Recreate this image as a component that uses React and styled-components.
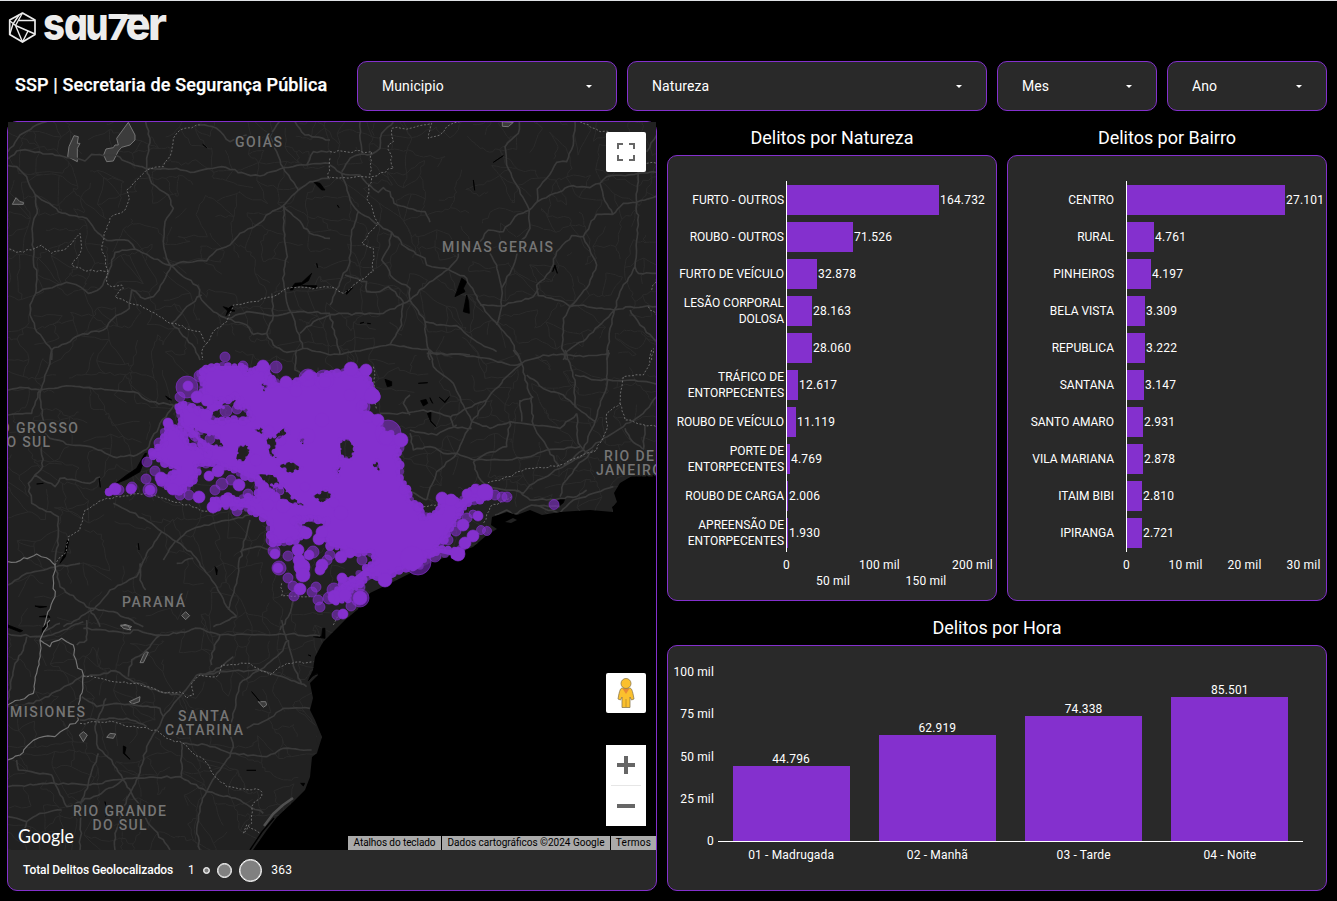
import React from "react";
import styled, { createGlobalStyle } from "styled-components";

const PURPLE = "#8430ce";

const GlobalStyle = createGlobalStyle`
  * { box-sizing: border-box; }
  body { margin: 0; background: #000; font-family: Roboto, "Liberation Sans", sans-serif; color: #fff; }
`;

const Page = styled.main`
  width: 1337px;
  height: 901px;
  background: #000;
  border-top: 1px solid #dfe1e5;
  overflow: hidden;
`;
const Brand = styled.header`
  height: 60px;
  padding-left: 8px;
  svg { display: block; }
`;
const FilterBar = styled.div`
  display: flex;
  gap: 10px;
  height: 50px;
`;
const PageTitle = styled.h1`
  width: 347px;
  margin: 0;
  padding-left: 15px;
  font-size: 18px;
  font-weight: 500;
  line-height: 48px;
  letter-spacing: 0.13px;
  white-space: nowrap;
  -webkit-text-stroke: 0.25px #fff;
`;
const Select = styled.button`
  width: ${(p) => p.$width}px;
  height: 50px;
  display: flex;
  align-items: center;
  justify-content: space-between;
  padding: 0 24px 0 24px;
  background: #292929;
  border: 1px solid ${PURPLE};
  border-radius: 10px;
  color: #fff;
  font: 400 14px Roboto, sans-serif;
  letter-spacing: 0.08px;
`;
const Caret = styled.span`
  border: 3.5px solid transparent;
  border-top: 3.5px solid #fff;
  border-bottom: 0;
  margin-top: 1px;
`;
const Content = styled.div`
  display: flex;
  gap: 10px;
  padding: 10px 10px 0 7px;
`;
const MapCard = styled.section`
  width: 650px;
  height: 770px;
  background: #292929;
  border: 1px solid ${PURPLE};
  border-radius: 10px;
`;
const MapView = styled.div`
  position: relative;
  height: 728px;
  background: #000;
  > svg { display: block; }
`;
const Controls = styled.div`
  position: absolute;
  right: 10px;
  top: ${(p) => p.$top}px;
  width: 40px;
  background: #fff;
  border-radius: ${(p) => p.$radius || 0}px;
  display: flex;
  flex-direction: column;
  align-items: center;
`;
const ControlButton = styled.button`
  width: 40px;
  height: 40px;
  padding: 0;
  border: 0;
  background: none;
  display: flex;
  align-items: center;
  justify-content: center;
`;
const Divider = styled.i`
  width: 30px;
  height: 1px;
  background: #e6e6e6;
`;
const Attribution = styled.div`
  position: absolute;
  right: 0;
  bottom: 0;
  display: flex;
  gap: 1px;
  font-size: 10px;
  line-height: 14px;
  color: #000;
`;
const Credit = styled.span`
  width: ${(p) => p.$width}px;
  background: #aaa;
  text-align: center;
  letter-spacing: ${(p) => p.$spacing}px;
  white-space: nowrap;
`;
const Legend = styled.div`
  height: 40px;
  display: flex;
  align-items: center;
  padding-left: 15px;
  font-size: 12px;
`;
const LegendName = styled.b`
  width: 165px;
  font-weight: 500;
  letter-spacing: -0.08px;
  white-space: nowrap;
`;
const LegendDot = styled.i`
  width: ${(p) => p.$size}px;
  height: ${(p) => p.$size}px;
  margin-left: ${(p) => p.$gap}px;
  border: 1.5px solid #fff;
  border-radius: 50%;
  background: #808080;
  box-shadow: inset 0 0 0 0.5px #ddd;
`;
const LegendMax = styled.span`
  margin-left: 9px;
  letter-spacing: 0.25px;
`;
const Charts = styled.div`
  width: 660px;
`;
const ChartRow = styled.div`
  display: flex;
  gap: 10px;
  margin-bottom: 10px;
`;
const Panel = styled.section`
  width: ${(p) => p.$width}px;
`;
const PanelTitle = styled.h2`
  height: 34px;
  margin: 0;
  font-size: 18px;
  font-weight: 400;
  line-height: 33px;
  letter-spacing: -0.02px;
  text-align: center;
`;
const ChartCard = styled.div`
  height: ${(p) => p.$height}px;
  padding-top: 25px;
  background: #292929;
  border: 1px solid ${PURPLE};
  border-radius: 10px;
  font-size: 12px;
`;
const Bars = styled.div`
  display: grid;
  grid-template-columns: 118px 1fr;
`;
const BarLabels = styled.div`
  padding-right: ${(p) => p.$pad}px;
`;
const BarLabel = styled.div`
  height: 37px;
  padding-top: 1px;
  display: flex;
  align-items: center;
  justify-content: flex-end;
  line-height: 16px;
  text-align: right;
  white-space: pre;
  letter-spacing: -0.01px;
`;
const BarPlot = styled.div`
  height: 371px;
  border-left: 1px solid #fff;
`;
const BarRow = styled.div`
  height: 37px;
  padding-top: 4px;
  display: flex;
  gap: 1px;
  line-height: 30px;
  letter-spacing: 0.2px;
`;
const Bar = styled.div`
  height: 30px;
  background: ${PURPLE};
`;
const XAxis = styled.div`
  width: ${(p) => p.$width}px;
  margin-left: 118px;
  display: flex;
  justify-content: space-between;
`;
const XTick = styled.span`
  width: 1px;
  display: flex;
  justify-content: center;
  white-space: nowrap;
  line-height: 16px;
  padding-top: ${(p) => (p.$lower ? 21 : 5)}px;
  letter-spacing: 0.2px;
`;
const HourChart = styled.div`
  display: flex;
  gap: 4px;
  letter-spacing: 0.15px;
`;
const YAxis = styled.div`
  width: 46px;
  height: 170px;
  display: flex;
  flex-direction: column;
  justify-content: space-between;
`;
const YTick = styled.span`
  height: 0;
  line-height: 0;
  text-align: right;
  padding-top: 1px;
`;
const HourPlot = styled.div`
  width: 585px;
`;
const HourBars = styled.div`
  height: 171px;
  display: flex;
  align-items: flex-end;
  justify-content: space-around;
  border-bottom: 1px solid #fff;
`;
const HourColumn = styled.div`
  width: 117px;
  text-align: center;
  line-height: 14px;
`;
const HourNames = styled.div`
  display: flex;
  padding-top: 5px;
`;
const HourName = styled.span`
  flex: 1;
  text-align: center;
  line-height: 16px;
`;

const natures = [
  ["FURTO - OUTROS", 164732, "164.732"],
  ["ROUBO - OUTROS", 71526, "71.526"],
  ["FURTO DE VEÍCULO", 32878, "32.878"],
  ["LESÃO CORPORAL\nDOLOSA", 28163, "28.163"],
  ["", 28060, "28.060"],
  ["TRÁFICO DE\nENTORPECENTES", 12617, "12.617"],
  ["ROUBO DE VEÍCULO", 11119, "11.119"],
  ["PORTE DE\nENTORPECENTES", 4769, "4.769"],
  ["ROUBO DE CARGA", 2006, "2.006"],
  ["APREENSÃO DE\nENTORPECENTES", 1930, "1.930"],
];
const districts = [
  ["CENTRO", 27101, "27.101"],
  ["RURAL", 4761, "4.761"],
  ["PINHEIROS", 4197, "4.197"],
  ["BELA VISTA", 3309, "3.309"],
  ["REPUBLICA", 3222, "3.222"],
  ["SANTANA", 3147, "3.147"],
  ["SANTO AMARO", 2931, "2.931"],
  ["VILA MARIANA", 2878, "2.878"],
  ["ITAIM BIBI", 2810, "2.810"],
  ["IPIRANGA", 2721, "2.721"],
];
const hours = [
  ["01 - Madrugada", 75, "44.796"],
  ["02 - Manhã", 106, "62.919"],
  ["03 - Tarde", 125, "74.338"],
  ["04 - Noite", 144, "85.501"],
];

/* ---- map geometry ---- */

// Each sheet is drawn on a grid three times finer than the map.
const sheets = [
  {
    x: 0, y: 115,
    roads: `M24,110 60,60 100,35 140,20M24,132 50,108 75,104 105,112 180,122 215,128 255,138 275,118 310,122 345,120 380,140 440,162
M437,20 450,70 440,130 440,162 455,205 480,225 505,240 520,280 495,320 490,380 500,430 513,452M440,162 530,160 570,172 665,155 740,178 780,183 850,158 920,150 990,145
M24,152 50,155 80,185 105,238 160,275 175,290 260,310 285,345 312,370 335,377 385,377 405,402 450,425 513,452 550,485 592,512 605,555 640,590 682,612
M105,238 112,285 98,330 100,430 110,480 107,535 90,570 90,600 105,640 155,705 155,735M107,535 145,520 200,502 240,515 265,535 300,520 325,475 345,412 405,402
M513,452 550,440 620,438 650,405 690,390 720,355 770,330 810,295 850,272 895,225 930,200 990,190M838,20 810,65 830,110 850,158 895,225
M850,272 853,370 862,425 848,490 860,560 885,620 908,700M850,272 890,310 930,355 990,370M600,30 650,40 690,80 740,60M885,20 915,60 990,75M920,150 940,110 990,108
M513,452 490,500 460,545 435,552 395,525 388,580 340,610 310,645 240,660 200,685 155,705M515,625 560,575 605,540M682,612 740,590 820,602 900,590 990,595
M682,612 740,630 760,658 800,655 820,690 860,712 910,700 990,720M815,535 820,602 800,655M515,625 560,670 585,700 600,735M900,655 940,620 990,600`,
    dots: `M28,402 50,412 95,405 125,390 155,415 200,400 240,355 245,400 215,450 250,465 325,470M600,30 540,45 520,70 515,110 490,155 440,165 400,205 380,225 388,250 375,285 330,310 312,370 305,400 325,470 320,500 335,515 365,510 370,520 345,545 390,565 420,570 510,625 600,650 620,685 605,710 608,735M620,685 640,650 680,620 700,570 760,560 830,540 860,520 990,517M990,130 985,190`,
    parks: `M203,125 207,95 222,62 235,65 232,85 240,85 232,100 232,140ZM350,70 385,22 405,60 405,75 390,90 365,97 355,108 340,138 320,140 311,120 318,102 340,98 345,90 355,90ZM37,268 48,248 60,260 70,262 70,268Z`,
    water: `M870,525 885,505 905,503 935,475 925,497 900,512 885,514 878,525ZM940,200 960,205 975,225 965,225ZM670,575 685,580 700,570 695,582 705,588 688,590 678,602 683,588ZM608,88 620,98ZM950,445 953,458ZM905,512 950,512 948,520 935,516Z`,
  },
  {
    x: 330, y: 115,
    roads: `M90,20 95,115M190,22 155,55 150,100 125,118 90,118 60,130 35,170M0,150 35,175 50,215 60,255 85,290 65,345 60,440 35,490 0,570M35,175 90,180 110,205 145,232 160,218 180,230 192,265 235,280 285,290 300,322
M85,290 125,315 185,352 225,395 285,430 290,450 355,463 410,490 450,565 495,620 540,670 570,735M185,352 175,400 155,435 190,490 240,520 240,555 285,620 290,680 300,735M355,463 290,510 240,555 160,595 0,598
M568,20 565,55 525,95 530,150 560,210 598,285 600,340 575,375 555,440 515,520 515,575 500,630M735,20 730,90 710,140 680,142 650,190 622,222 622,260 598,285 555,305 520,350 475,345 450,380
M622,260 660,240 730,212 780,218 810,205 830,185 925,175 980,172M925,170 920,265 925,330 915,455 870,530 853,585 840,640 830,735M810,205 820,245 848,298 800,298 760,365 800,450 770,520 720,575 700,610 695,700 710,735
M848,298 880,265 920,262 980,243M760,365 725,362 680,410 660,470 620,510 625,542 700,560 720,575 760,570 800,580 853,585 900,575 980,575M480,415 500,450 515,520M450,570 515,573 560,560 610,545 625,520
M853,585 770,670 710,710 700,735M900,585 930,630 980,680M0,720 100,705 180,688 300,705 310,715 420,720M0,598 30,720M285,620 320,630 380,632 440,680 500,710M385,410 380,435 355,463M220,560 215,630 180,690
M45,480 110,500 110,530 150,530 175,515 220,560M915,455 925,475 980,475M980,60 950,110`,
    dots: `M390,20 350,35 330,60 295,70 305,25 240,40 185,40 190,80 175,90 190,160 125,185 110,250 145,325 95,385 130,400 130,470 90,495 40,535 0,515M0,110 125,110 120,187 0,187M750,20 810,50 840,50M950,145 980,145M980,490 965,525M955,575 980,600M965,735 970,700`,
    parks: `M517,20 517,34 535,35 550,22Z`,
    water: `M375,545 395,490 410,500 400,520 405,530ZM400,590 410,540 416,560 418,595ZM45,530 68,518 50,538ZM490,142 520,122ZM430,195 434,226ZM22,270 27,278ZM90,625 102,622ZM112,625 122,626ZM668,470 675,450 682,475 674,455Z`,
  },
  {
    x: 0, y: 350,
    roads: `M155,0 150,40 120,130M24,120 60,112 120,120 215,108 330,120 400,125 450,155 520,165M120,120 95,190 24,195M120,130 135,250 150,265 215,285 270,290 350,323 410,315 440,298 480,220 530,160
M125,290 128,350 105,375 85,400 95,460 175,500 175,560 165,645 180,710 270,775 300,830M105,375 165,410 180,385 215,388 270,400 300,380M24,705 80,670 165,652 240,640
M340,460 380,480 430,505 485,545 530,575 560,545 600,530 690,510 750,495M530,575 580,615 650,710 680,770 710,800M485,545 440,610 410,680 330,720 280,780 190,830M750,510 730,590 715,650 710,700 685,780
M530,640 580,625M490,630 525,575M880,750 865,800 840,840M720,605 770,590 820,600M270,775 340,785 430,830M420,640 420,690 437,720M890,0 885,60 930,90M640,830 710,800`,
    dots: `M165,645 200,600 205,560 240,540 255,480 320,445 440,430 640,490M845,700 845,738 930,740`,
    solid: `M24,635 60,632 110,612 150,630 165,645 160,690 165,740 140,800 130,840`,
    parks: `M557,785 569,797 557,809 545,797ZM362,828 375,823 395,830 385,838Z`,
    water: `M345,402 380,375 410,355 435,310 440,310 420,365 380,388ZM202,570 206,575 196,620 180,640 194,610ZM105,768 140,770 120,773ZM118,800 145,796 150,802ZM415,580 417,600ZM645,650 652,660 650,675ZM110,402 130,400ZM497,138 515,150 505,148ZM297,380 301,412Z`,
  },
  {
    x: 330, y: 350,
    roads: `M300,0 310,50 370,100 400,165 425,215M290,10 400,15 490,30 540,45 575,40M550,0 575,40 530,80 470,150 425,215 380,310 320,365 290,450M575,40 585,90 605,140 610,225 650,290 690,350
M575,40 640,15 720,15 760,20 840,10M705,0 735,90 735,170 795,215M835,0 830,110 795,215 760,300 700,350M590,75 650,120 700,135 740,170M735,75 800,90 900,90 950,95 980,102
M425,215 480,235 540,215 610,225 690,235 740,190M470,150 400,180 360,205M380,310 440,330 520,330 600,320 650,300 750,290M230,190 280,180 330,190 360,200 370,230 425,235M240,135 220,160 240,195M240,250 250,300 300,290 340,310 380,310
M240,240 320,255 380,225M430,335 445,380 470,410 540,420 580,430 600,405 700,350M540,215 530,290 470,310 430,335M700,350 760,315 820,265 880,230 940,190 980,140M560,420 600,450 690,445M690,440 700,400 740,350 790,300
M605,465 690,490 730,450 850,410M690,445 740,440 770,420M885,235 900,265 940,300M945,225 940,300M150,190 230,190M495,495 530,480 550,495 605,465 690,470M740,190 745,280 770,310M570,150 575,215M290,450 230,420M610,140 570,155`,
    dots: `M965,0 960,40 940,75 880,80 870,160 830,190 830,240 800,300 690,345 600,355 530,380 470,400M870,160 885,210 980,230M545,440 480,470 460,520M280,470 340,465M130,50 135,120 140,180M10,825 30,790`,
    water: `M165,88 185,95 185,107 172,110ZM272,152 288,148 293,160 280,168ZM328,142 344,155 358,140 345,158ZM292,190 303,187 302,215 318,230 300,210ZM685,450 705,445 700,458 690,466ZM265,100 293,98ZM300,143 308,160 302,150Z`,
  },
  {
    x: 0, y: 620,
    roads: `M24,42 120,50 155,45 250,5M80,50 70,90 45,130 24,240M260,0 260,60 230,75M250,25 390,40 400,30 480,45 530,40 600,25 660,45 800,45 870,42 960,48M480,45 430,100 395,120 385,170M660,45 635,100 635,135
M590,165 540,230 490,290 470,330 440,380 415,470 370,560 345,640 345,690M250,168 300,165 345,152 380,175 440,200 480,215 540,225M245,230 290,260 350,250 480,265 490,290M24,260 100,250 180,210 250,165M240,300 380,295 440,320
M318,235 285,320 295,385 335,420 370,480 395,520 440,600 510,690M295,400 265,490 245,540 240,690M24,500 165,490 270,495 380,475 540,470 620,515 720,540 790,580M50,420 55,450 155,465 175,510 200,560 280,530 380,475M545,370 545,470
M620,515 600,560 590,640 600,690M620,515 650,460 690,410 700,380 690,330 720,190 780,150 860,175 920,200M690,400 760,405 800,410 850,385 935,390M590,165 680,155 780,150M865,60 840,100 780,150M865,60 885,150 905,195M845,0 860,60
M740,325 800,300 850,265 930,265M24,590 80,605 120,580 185,570M80,605 60,660M545,370 620,375 690,400M130,35 180,10M590,165 640,155 700,110`,
    dots: `M250,168 300,175 340,185 400,190 480,215 550,220 560,235 580,225 575,190 600,165 650,170 665,135 750,130 810,165 860,130 940,125M240,310 340,305 390,320 470,330 500,355 550,370 620,430 645,470 680,500 780,510 785,530 755,560 755,610 730,640 740,615 780,640`,
    solid: `M150,0 120,60 150,80 155,68 185,55 200,65 220,75 230,130 250,165 240,240 235,300 190,330 165,350 130,350 90,370 60,405 24,420M120,60 120,100 110,160 100,220 60,240 24,255`,
    parks: `M362,15 385,18 392,30 370,25ZM420,128 435,95 445,97 430,128ZM388,245 420,230 418,245 398,252ZM238,345 250,335 262,345 250,365ZM320,352 330,340 347,342 340,355ZM775,245 797,245 800,255 790,262Z`,
    water: `M24,15 68,32 60,36 24,22ZM128,25 150,0 142,20 126,45ZM370,378 378,382 374,400 390,418 370,400ZM740,451 768,451ZM925,182 940,162 955,160 938,168ZM315,545 318,560ZM315,580 318,590ZM755,215 780,245ZM925,105 933,108ZM902,490 914,490 910,498ZM940,50 965,50 968,25 975,25 975,55Z`,
  },
];

const COAST =
  "M656,475 632,476 620,483 614,493 617,502 612,507 613,512 590,510 560,512 542,515 530,510 517,515 507,512 492,517 491,525 497,529 487,535 473,547 430,563 397,580 370,593 357,610 345,620 330,635 323,642 315,657 313,670 308,680 317,673 318,675 310,683 313,698 310,710 315,720 322,737 317,753 312,757 310,777 305,790 293,802 277,817 267,830 253,850 8,850 8,122 656,122Z";

function seeded(seed) {
  let s = seed;
  return () => {
    s = (s * 1664525 + 1013904223) % 4294967296;
    return s / 4294967296;
  };
}

// Faint mesh of secondary roads.
function localRoads() {
  const rnd = seeded(41);
  const step = 16;
  const cols = 42;
  const rows = 48;
  const pts = [];
  for (let r = 0; r < rows; r++)
    for (let c = 0; c < cols; c++)
      pts.push([8 + c * step + (rnd() - 0.5) * 15, 118 + r * step + (rnd() - 0.5) * 15]);
  let d = "";
  const link = (a, b) => {
    d += `M${a[0].toFixed(1)},${a[1].toFixed(1)}`;
    for (let i = 1; i <= 4; i++) {
      const j = i === 4 ? 0 : 3.6;
      const x = a[0] + ((b[0] - a[0]) * i) / 4 + (rnd() - 0.5) * j;
      const y = a[1] + ((b[1] - a[1]) * i) / 4 + (rnd() - 0.5) * j;
      d += `L${x.toFixed(1)},${y.toFixed(1)}`;
    }
  };
  for (let r = 0; r < rows - 1; r++)
    for (let c = 0; c < cols - 1; c++) {
      const p = pts[r * cols + c];
      if (rnd() < 0.5) link(p, pts[r * cols + c + 1]);
      if (rnd() < 0.5) link(p, pts[(r + 1) * cols + c]);
      if (rnd() < 0.12) link(p, pts[(r + 1) * cols + c + 1]);
    }
  return d;
}

// Adds small bends to a traced polyline.
function roughen(path, seed, amount) {
  const rnd = seeded(seed);
  return path
    .split("M")
    .filter((s) => s.trim())
    .map((s) => {
      const pts = s.trim().split(/\s+/).map((t) => t.split(",").map(Number));
      let out = `M${pts[0]}`;
      for (let i = 1; i < pts.length; i++) {
        const [ax, ay] = pts[i - 1];
        const [bx, by] = pts[i];
        const n = Math.max(1, Math.round(Math.hypot(bx - ax, by - ay) / 13));
        for (let k = 1; k <= n; k++) {
          const j = k === n ? 0 : amount;
          out += `L${(ax + ((bx - ax) * k) / n + (rnd() - 0.5) * j).toFixed(1)},${(ay + ((by - ay) * k) / n + (rnd() - 0.5) * j).toFixed(1)}`;
        }
      }
      return out;
    })
    .join("");
}

const outline = [
  [200, 374], [206, 369], [217, 366], [228, 366], [241, 366], [247, 372], [256, 370], [262, 366], [266, 368], [268, 376], [276, 382], [290, 386],
  [297, 382], [303, 379], [309, 374], [318, 377], [327, 374], [337, 373], [350, 369], [356, 374], [364, 370], [368, 380], [372, 390], [376, 397],
  [364, 401], [363, 410], [369, 417], [378, 420], [382, 430], [400, 437], [400, 448], [396, 457], [400, 465], [400, 478], [407, 489], [410, 500],
  [419, 507], [422, 517], [430, 516], [440, 510], [443, 498], [452, 498], [458, 503], [467, 494], [475, 488], [486, 490], [488, 496], [480, 500],
  [468, 503], [460, 512], [457, 520], [450, 528], [444, 540], [436, 548], [448, 550], [461, 549], [460, 556], [454, 556], [436, 552], [428, 554], [420, 566],
  [406, 568], [392, 573], [386, 581], [377, 576], [367, 576], [360, 584], [350, 590], [348, 600], [336, 602], [333, 595], [342, 584], [352, 579], [366, 568],
  [376, 561], [371, 553], [358, 553], [350, 553], [344, 549], [330, 546], [323, 534], [326, 521], [318, 520], [310, 518], [302, 520], [298, 518], [294, 521],
  [303, 530], [306, 535], [295, 540], [284, 543], [273, 543], [270, 535], [270, 522], [256, 514], [247, 508], [234, 506], [218, 508], [213, 504], [213, 500],
  [220, 500], [228, 497], [237, 500], [248, 497], [257, 499], [258, 487], [258, 480], [245, 476], [234, 470], [225, 467], [216, 464],
  [208, 462], [196, 464], [198, 472], [193, 480], [187, 487], [179, 491], [167, 487], [161, 482], [172, 475], [177, 470], [165, 463], [153, 456], [152, 452], [164, 443],
  [164, 432], [170, 425], [179, 430], [184, 436], [188, 446], [198, 447], [208, 454], [202, 444], [192, 434], [181, 425], [180, 415], [178, 407], [184, 404], [192, 408], [202, 412],
  [212, 420], [222, 421], [234, 419], [243, 421], [252, 418], [247, 409], [238, 405], [240, 400], [235, 396], [228, 400], [219, 401], [210, 400], [202, 392], [203, 383],
];
const gaps = [
  [[197, 430], [203, 434], [215, 437], [220, 445], [214, 444], [203, 440]],
  [[240, 448], [246, 447], [248, 452], [243, 460], [238, 458]],
  [[256, 430], [262, 428], [263, 434]],
  [[269, 439], [275, 438], [282, 432], [285, 435], [277, 441], [275, 449], [277, 454], [272, 452]],
  [[282, 466], [291, 463], [298, 468], [290, 472]],
  [[262, 476], [274, 477], [278, 485], [270, 487]],
  [[276, 488], [283, 488], [291, 497], [300, 503], [293, 502], [280, 497]],
  [[316, 496], [325, 491], [330, 496], [322, 501]],
  [[342, 443], [348, 442], [353, 449], [350, 456], [343, 455]],
  [[336, 470], [340, 468], [338, 474]],
  [[212, 411], [221, 407], [219, 401], [208, 404]],
  [[373, 465], [377, 462], [379, 470]],
  [[262, 384], [267, 386], [264, 391]],
  [[300, 440], [304, 438], [303, 444]],
];

// x, y, radius, 1 = solid
const spots = [
  [225, 357, 5], [243, 366, 5], [263, 366, 6, 1], [276, 367, 6], [187, 387, 11], [188, 386, 5, 1], [180, 397, 5], [200, 376, 6], [197, 397, 6, 1], [207, 400, 6, 1],
  [226, 411, 6], [237, 409, 5], [199, 411, 5], [206, 415, 6, 1], [168, 423, 5, 1], [159, 443, 5], [147, 462, 5], [146, 479, 5], [155, 471, 5], [150, 490, 7], [150, 490, 5, 1],
  [109, 492, 4, 1], [115, 489, 6, 1], [119, 490, 5], [131, 489, 5, 1], [132, 487, 5], [161, 478, 6, 1], [173, 489, 6, 1], [189, 495, 5], [180, 495, 5], [199, 497, 6, 1], [213, 507, 6, 1],
  [206, 463, 5], [218, 471, 6, 1], [209, 476, 5, 1], [215, 490, 5], [222, 484, 6], [231, 480, 5], [239, 485, 6, 1], [248, 494, 5], [210, 439, 5], [195, 436, 5], [186, 431, 5],
  [237, 511, 5], [226, 500, 5, 1], [264, 487, 5, 1], [275, 497, 5, 1], [268, 505, 6], [283, 506, 7, 1], [305, 487, 5, 1], [280, 491, 4], [256, 460, 6, 1], [269, 430, 5, 1], [281, 441, 5],
  [272, 383, 5], [286, 382, 6, 1], [296, 391, 6], [308, 378, 9], [309, 375, 5, 1], [324, 380, 10], [325, 382, 6, 1], [351, 369, 7, 1], [366, 370, 6, 1], [372, 396, 8, 1], [363, 407, 7],
  [368, 417, 6, 1], [378, 420, 6, 1], [388, 433, 13], [386, 438, 7, 1], [401, 440, 7, 1], [350, 395, 6], [322, 420, 7], [307, 436, 8], [334, 503, 5], [341, 513, 7], [404, 490, 5], [418, 507, 5],
  [554, 504.5, 5], [495, 495, 5], [502, 497, 5], [507, 497, 5], [476, 489, 5], [467, 494, 5, 1], [485, 492, 8, 1], [478, 516, 5, 1], [467, 518, 5], [473, 514, 4], [463, 525, 6, 1], [456, 531, 5], [487, 531, 4.5], [481, 530, 4.5],
  [473, 536, 6, 1], [465, 543, 6, 1], [458, 554, 7, 1], [442, 498, 6, 1], [451, 500, 6, 1], [448, 540, 5], [418, 562, 13], [412, 558, 12, 1], [435, 556, 6], [385, 580, 7, 1], [362, 560, 5],
  [341, 557, 6, 1], [330, 555, 5], [350, 553, 5, 1], [342, 578, 5, 1], [334, 590, 7], [335, 597, 7, 1], [360, 598, 9], [360, 598, 7, 1], [351, 606, 5], [343, 614, 5, 1], [337, 615, 5], [345, 595, 6, 1], [360, 587, 5],
  [279, 568, 7], [278, 568, 5, 1], [288, 556, 5], [299, 560, 6, 1], [302, 567, 8, 1], [309, 555, 5, 1], [313, 552, 6], [322, 565, 6, 1], [327, 560, 5], [300, 589, 6, 1], [288, 578, 5], [293, 586, 5], [294, 596, 5],
  [306, 533, 6, 1], [319, 539, 6, 1], [322, 532, 6, 1], [316, 587, 5], [312, 592, 5], [318, 600, 5], [320, 607, 5], [329, 598, 6], [320, 570, 5, 1], [274, 551, 6], [272, 540, 6], [275, 554, 5, 1], [298, 550, 6, 1], [303, 575, 7, 1],
];

const closed = (pts) => `M${pts.map((p) => p.join(",")).join("L")}Z`;

// Gaps grow a little so that the dots laid on their rims leave them open.
const widened = gaps.map((pts) => {
  const cx = pts.reduce((s, p) => s + p[0], 0) / pts.length;
  const cy = pts.reduce((s, p) => s + p[1], 0) / pts.length;
  return pts.map(([x, y]) => [cx + (x - cx) * 1.4, cy + (y - cy) * 1.4]);
});
const bodyPath = closed(outline) + widened.map(closed).join("");

const textureRnd = seeded(7);
const along = (pts, r) =>
  pts.flatMap(([x, y], i) => {
    const [nx, ny] = pts[(i + 1) % pts.length];
    return [
      [x, y, r + textureRnd() * 1.8],
      [(x + nx) / 2, (y + ny) / 2, r - 0.6 + textureRnd() * 1.8],
    ];
  });
const rim = [...along(outline, 3.2), ...widened.flatMap((g) => along(g, 1.3))];

const MapLabel = styled.text`
  font: 500 14px Roboto, sans-serif;
  fill: #757575;
  stroke: #212121;
  stroke-width: 3px;
  paint-order: stroke;
  text-anchor: middle;
`;
const GoogleMark = styled.text`
  font: 400 20px Lato, sans-serif;
  fill: #fff;
  stroke: #222;
  stroke-width: 2px;
  paint-order: stroke;
`;
const labels = [
  ["GOIÁS", 258.5, 146.5, 47], ["MINAS GERAIS", 497.5, 251.5, 111], ["O GROSSO", 39, 432.5, 78], ["DO SUL", 23, 446.5, 54], ["RIO DE", 629, 460.5, 50], ["JANEIRO", 629, 474.5, 66],
  ["PARANÁ", 153.5, 606.5, 63], ["MISIONES", 47.5, 716.5, 75], ["SANTA", 203.5, 720.5, 51], ["CATARINA", 204, 734.5, 78], ["RIO GRANDE", 119.5, 815.5, 93], ["DO SUL", 119.5, 829.5, 54],
];

function TerrainMap() {
  return (
    <svg width="648" height="728" viewBox="8 122 648 728" aria-label="Mapa">
      <defs>
        <clipPath id="land"><path d={COAST} /></clipPath>
      </defs>
      <path d={COAST} fill="#212121" />
      <g clipPath="url(#land)" fill="none" strokeLinejoin="round">
        <path d={localRoads()} stroke="#2b2b2b" strokeWidth="1" />
        {sheets.map((s, i) => (
          <g key={i} transform={`translate(${s.x} ${s.y}) scale(0.33333)`}>
            {s.parks && <path d={s.parks} fill="#3c3c3c" stroke="#757575" strokeWidth="3" />}
            <path d={s.water} fill="#000" stroke="#000" strokeWidth="2.5" />
            <path d={roughen(s.roads, i + 3, 6)} stroke="#3a3a3a" strokeWidth="5" />
            <path d={roughen(s.dots, i + 9, 7)} stroke="#777" strokeWidth="2.6" strokeDasharray="6 5" />
            {s.solid && <path d={roughen(s.solid, i + 5, 8)} stroke="#757575" strokeWidth="3.5" />}
          </g>
        ))}
        <path d="M293,798 283,805 273,814 264,826" stroke="#505050" strokeWidth="2.5" />
        <path d="M274,818 262,832 250,850" stroke="#000" strokeWidth="1.5" />
      </g>
      <path d="M505,522l8,-4 4,2 -6,3zM322,737l-4,8 -2,-6 3,-8z" fill="#212121" />
      {labels.map(([t, x, y, w]) => (
        <MapLabel key={t + y} x={x} y={y} textLength={w}>{t}</MapLabel>
      ))}
      <path d={bodyPath} fill={PURPLE} fillRule="evenodd" />
      {rim.map(([x, y, r], i) => (
        <circle key={i} cx={x} cy={y} r={r} fill={PURPLE} fillOpacity={i % 5 ? 0.95 : 0.6} />
      ))}
      {spots.map(([x, y, r, solid], i) => (
        <circle key={i} cx={x} cy={y} r={r} fill={PURPLE} fillOpacity={solid ? 1 : 0.58} stroke={PURPLE} strokeOpacity="0.8" strokeWidth="0.8" />
      ))}
      <GoogleMark x="18" y="843" textLength="56" lengthAdjust="spacingAndGlyphs">Google</GoogleMark>
    </svg>
  );
}

const Wordmark = styled.text`
  font: 800 45px Inter, sans-serif;
  font-feature-settings: "cv11";
  fill: #ececec;
`;

function Logo() {
  return (
    <svg width="170" height="60" viewBox="8 1 170 60" aria-label="sauzer">
      <g fill="none" stroke="#ececec" strokeWidth="1.7" strokeLinejoin="round">
        <path d="M22.500,13 35,20V34.500L22.500,42 9.700,34.500V20Z" />
        <path d="M19,15 13,24 9.700,34.500M19,20.500 35,20.500M22.500,13 15.500,25.500 35,34M15.500,25.500 22.500,42 28,31 35,34M15.500,25.500 10,21" strokeWidth="1.400" />
      </g>
      <Wordmark x="43" y="40">
        <tspan textLength="22" lengthAdjust="spacingAndGlyphs">s</tspan>
        <tspan x="64" textLength="24" lengthAdjust="spacingAndGlyphs">a</tspan>
        <tspan x="85.500" textLength="23" lengthAdjust="spacingAndGlyphs">u</tspan>
        <tspan x="107.500" fontSize="34" style={{ fontSize: 35 }} textLength="21" lengthAdjust="spacingAndGlyphs">7</tspan>
        <tspan x="125.500" textLength="25" lengthAdjust="spacingAndGlyphs">e</tspan>
        <tspan x="148" textLength="19" lengthAdjust="spacingAndGlyphs">r</tspan>
      </Wordmark>
      <path d="M124,14.500H143V19H124Z" fill="#ececec" />
    </svg>
  );
}

function HorizontalBars({ data, scale, pad, ticks, axisWidth, stagger }) {
  return (
    <ChartCard $height={446}>
      <Bars>
        <BarLabels $pad={pad}>
          {data.map(([name], i) => <BarLabel key={i}>{name}</BarLabel>)}
        </BarLabels>
        <BarPlot>
          {data.map(([, value, text]) => (
            <BarRow key={text}>
              <Bar style={{ width: Math.round(value * scale - 1.05) }} />
              <span>{text}</span>
            </BarRow>
          ))}
        </BarPlot>
      </Bars>
      <XAxis $width={axisWidth}>
        {ticks.map((t, i) => <XTick key={t} $lower={stagger && i % 2 === 1}>{t}</XTick>)}
      </XAxis>
    </ChartCard>
  );
}

export default function App() {
  return (
    <Page>
      <GlobalStyle />
      <Brand><Logo /></Brand>
      <FilterBar>
        <PageTitle>SSP | Secretaria de Segurança Pública</PageTitle>
        {[["Municipio", 260], ["Natureza", 360], ["Mes", 160], ["Ano", 160]].map(([name, width]) => (
          <Select key={name} $width={width}>{name}<Caret /></Select>
        ))}
      </FilterBar>
      <Content>
        <MapCard>
          <MapView>
            <TerrainMap />
            <Controls $top={10} $radius={2}>
              <ControlButton aria-label="Tela cheia">
                <svg width="18" height="18" viewBox="0 0 18 18" fill="#666">
                  <path d="M0 0v6h2V2h4V0H0zm16 0h-4v2h4v4h2V0h-2zm0 16h-4v2h6v-6h-2v4zM2 12H0v6h6v-2H2v-4z" />
                </svg>
              </ControlButton>
            </Controls>
            <Controls $top={551} $radius={2}>
              <ControlButton aria-label="Street View">
                <svg width="18" height="32" viewBox="0 0 18 32">
                  <path d="M5.500 11h7c2 0 3 2 4.500 11l-2.500 1-1.500-3v10.500H5V20l-1.500 3L1 22C2.500 13 3.500 11 5.500 11z" fill="#fbc02d" stroke="#8c7a50" strokeWidth=".8" />
                  <path d="M5.500 11.500h7L9 17z" fill="#e88936" />
                  <path d="M9 22v8" stroke="#b98b28" strokeWidth=".8" />
                  <circle cx="9" cy="6.500" r="5" fill="#fbc02d" stroke="#8c7a50" strokeWidth=".8" />
                </svg>
              </ControlButton>
            </Controls>
            <Controls $top={623}>
              <ControlButton aria-label="Aumentar zoom">
                <svg width="18" height="18" fill="#666"><path d="M7 0h4v7h7v4h-7v7H7v-7H0V7h7z" /></svg>
              </ControlButton>
              <Divider />
              <ControlButton aria-label="Diminuir zoom">
                <svg width="18" height="18" fill="#666"><path d="M0 7h18v4H0z" /></svg>
              </ControlButton>
            </Controls>
            <Attribution>
              <Credit $width={93} $spacing={-0.08}>Atalhos do teclado</Credit>
              <Credit $width={168} $spacing={0}>Dados cartográficos ©2024 Google</Credit>
              <Credit $width={45} $spacing={0.25}>Termos</Credit>
            </Attribution>
          </MapView>
          <Legend>
            <LegendName>Total Delitos Geolocalizados</LegendName>
            <span>1</span>
            <LegendDot $size={7} $gap={8.500} />
            <LegendDot $size={15} $gap={7} />
            <LegendDot $size={23} $gap={7} />
            <LegendMax>363</LegendMax>
          </Legend>
        </MapCard>
        <Charts>
          <ChartRow>
            <Panel $width={330}>
              <PanelTitle>Delitos por Natureza</PanelTitle>
              <HorizontalBars data={natures} scale={0.000932} pad={2} axisWidth={187} stagger ticks={["0", "50 mil", "100 mil", "150 mil", "200 mil"]} />
            </Panel>
            <Panel $width={320}>
              <PanelTitle>Delitos por Bairro</PanelTitle>
              <HorizontalBars data={districts} scale={0.00588} pad={12} axisWidth={178} ticks={["0", "10 mil", "20 mil", "30 mil"]} />
            </Panel>
          </ChartRow>
          <Panel $width={660}>
            <PanelTitle>Delitos por Hora</PanelTitle>
            <ChartCard $height={246}>
              <HourChart>
                <YAxis>
                  {["100 mil", "75 mil", "50 mil", "25 mil", "0"].map((t) => <YTick key={t}>{t}</YTick>)}
                </YAxis>
                <HourPlot>
                  <HourBars>
                    {hours.map(([name, height, text]) => (
                      <HourColumn key={name}>
                        {text}
                        <Bar style={{ height }} />
                      </HourColumn>
                    ))}
                  </HourBars>
                  <HourNames>
                    {hours.map(([name]) => <HourName key={name}>{name}</HourName>)}
                  </HourNames>
                </HourPlot>
              </HourChart>
            </ChartCard>
          </Panel>
        </Charts>
      </Content>
    </Page>
  );
}
